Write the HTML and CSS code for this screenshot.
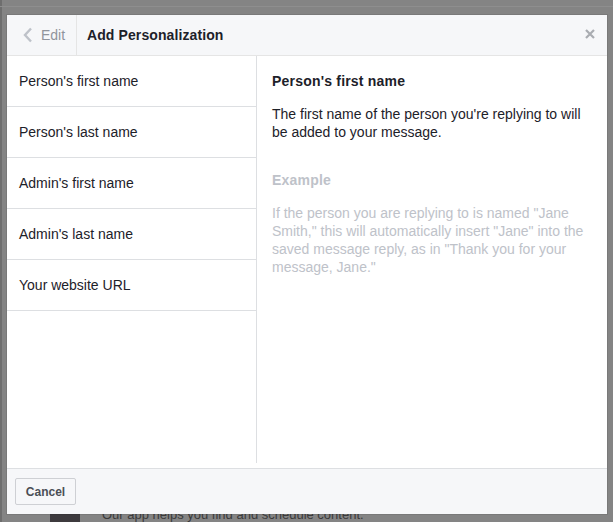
FILE: index.html
```html
<!DOCTYPE html>
<html>
<head>
<meta charset="utf-8">
<link rel="stylesheet" href="styles.css">
</head>
<body>
<div class="backdrop">
  <div class="bg-line"></div>
  <div class="bg-bottom">
    <div class="bg-thumb"></div>
    <div class="bg-text">Our app helps you find and schedule content.</div>
  </div>
  <div class="dialog">
    <div class="header">
      <div class="back">
        <svg class="chev" width="11" height="16" viewBox="0 0 11 16"><path d="M9 1.5 L3 8 L9 14.5" fill="none" stroke="#bec2c9" stroke-width="2.4"/></svg>
        <span class="edit">Edit</span>
      </div>
      <div class="title">Add Personalization</div>
      <svg class="close" width="10" height="10" viewBox="0 0 10 10"><path d="M1 1 L9 9 M9 1 L1 9" stroke="#a9acb1" stroke-width="2.2"/></svg>
    </div>
    <div class="body">
      <div class="list">
        <div class="item">Person's first name</div>
        <div class="item">Person's last name</div>
        <div class="item">Admin's first name</div>
        <div class="item">Admin's last name</div>
        <div class="item">Your website URL</div>
      </div>
      <div class="detail">
        <div class="d-title">Person's first name</div>
        <div class="d-text">The first name of the person you're replying to will be added to your message.</div>
        <div class="ex-title">Example</div>
        <div class="ex-text">If the person you are replying to is named "Jane Smith," this will automatically insert "Jane" into the saved message reply, as in "Thank you for your message, Jane."</div>
      </div>
    </div>
    <div class="footer">
      <button class="cancel">Cancel</button>
    </div>
  </div>
</div>
</body>
</html>
```
FILE: styles.css
```css
* { box-sizing: border-box; }
html, body { margin: 0; padding: 0; }
body {
  width: 613px;
  height: 522px;
  overflow: hidden;
  font-family: "Liberation Sans", Arial, sans-serif;
  background: #828282;
}
.backdrop {
  position: relative;
  width: 613px;
  height: 522px;
  padding: 15px 0 0 7px;
  background: linear-gradient(to right, #6e6e6e 0, #6e6e6e 2px, #848484 2px);
}
.bg-line {
  position: absolute;
  left: 0; right: 0; top: 6px;
  height: 1px;
  background: #8e8e8e;
}
.bg-bottom {
  position: absolute;
  left: 50px; top: 500px;
  display: flex;
  gap: 22px;
  align-items: flex-start;
}
.bg-thumb {
  width: 30px; height: 30px;
  background: #3d3a3e;
}
.bg-text {
  font-size: 13px;
  color: #3b3b3b;
  margin-top: 7px;
}
.dialog {
  position: relative;
  width: 600px;
  height: 499px;
  background: #fff;
  display: flex;
  flex-direction: column;
  box-shadow: 0 0 0 1px rgba(0,0,0,0.08);
}
.header {
  height: 41px;
  flex: none;
  background: #f6f7f9;
  border-bottom: 1px solid #e5e5e5;
  display: flex;
  align-items: center;
  position: relative;
}
.back {
  display: flex;
  align-items: center;
  height: 100%;
  width: 70px;
  padding-left: 15px;
  border-right: 1px solid #e5e5e5;
}
.chev { display: block; margin-right: 8px; }
.edit {
  font-size: 14px;
  color: #90949c;
}
.title {
  font-size: 14px;
  font-weight: bold;
  color: #1d2129;
  margin-left: 10px;
  letter-spacing: 0.1px;
}
.close {
  position: absolute;
  right: 12px;
  top: 14px;
}
.body {
  height: 412px;
  flex: none;
  display: flex;
  align-items: flex-start;
}
.list {
  width: 250px;
  height: 407px;
  border-right: 1px solid #dddfe2;
}
.item {
  height: 51px;
  border-bottom: 1px solid #dddfe2;
  display: flex;
  align-items: center;
  padding-left: 12px;
  padding-bottom: 1px;
  font-size: 14px;
  color: #1d2129;
}
.detail {
  flex: 1;
  padding: 16px 16px 0 15px;
  font-size: 14px;
  line-height: 18px;
}
.d-title {
  font-weight: bold;
  color: #1d2129;
  letter-spacing: 0.2px;
}
.d-text {
  margin-top: 15px;
  color: #1d2129;
}
.ex-title {
  margin-top: 30px;
  font-weight: bold;
  color: #bec2c9;
  letter-spacing: 0.2px;
}
.ex-text {
  margin-top: 15px;
  color: #bec2c9;
}
.footer {
  flex: 1;
  background: #f6f7f9;
  border-top: 1px solid #dddfe2;
  padding: 9px 8px;
}
.cancel {
  height: 27px;
  width: 61px;
  padding: 0;
  border: 1px solid #ced0d4;
  border-radius: 2px;
  background: #f6f7f9;
  font-family: "Liberation Sans", Arial, sans-serif;
  font-size: 12px;
  font-weight: bold;
  color: #4b4f56;
}
```
